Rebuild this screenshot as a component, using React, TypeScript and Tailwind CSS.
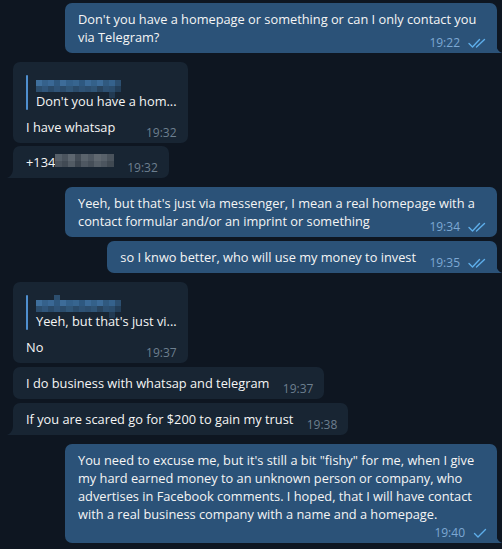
import type { ReactNode } from 'react'

type Msg = {
  out: boolean
  text: ReactNode
  time: string
  tail?: boolean
  read?: 'one' | 'two'
  reply?: string
  timeRow?: boolean
  gap: string
}

const BG_IN = '#182533'

// 가려진 이름/번호 모자이크 칸 색
const NAME_CELLS = [
  ['#3f6f9c', '#35618b', '#3a6895', '#2f587f', '#3d6c99', '#33608a', '#37658f', '#2e5880', '#3b6a97', '#34618a', '#3c6b98', '#30597f', '#35628c', '#2c4f70'],
  ['#2c4e6e', '#30557a', '#2a4a69', '#2f5377', '#2b4c6c', '#305678', '#2a4b6a', '#2e5275', '#2c4e6f', '#2f5476', '#28445f', '#2d5072', '#2b4d6d', '#233e58'],
  [BG_IN, BG_IN, BG_IN, BG_IN, BG_IN, BG_IN, BG_IN, BG_IN, BG_IN, BG_IN, BG_IN, BG_IN, '#223a52', BG_IN],
]
const REPLY2_CELLS = [
  [BG_IN, BG_IN, BG_IN, '#2c4e6e', BG_IN, BG_IN, BG_IN, BG_IN, BG_IN, BG_IN, BG_IN, BG_IN, BG_IN, BG_IN],
  ['#3f6f9c', '#35618b', '#3a6895', '#2f587f', '#3d6c99', '#33608a', '#37658f', '#2e5880', '#3b6a97', '#34618a', '#3c6b98', '#30597f', '#35628c', '#2c4f70'],
  ['#2c4e6e', '#30557a', '#2a4a69', '#2f5377', '#2b4c6c', '#305678', '#2a4b6a', '#2e5275', '#2c4e6f', '#2f5476', '#28445f', '#2d5072', '#2b4d6d', '#233e58'],
  [BG_IN, BG_IN, BG_IN, BG_IN, BG_IN, BG_IN, BG_IN, BG_IN, BG_IN, BG_IN, BG_IN, BG_IN, '#223a52', BG_IN],
]
const PHONE_CELLS = [
  ['#56606a', '#4b545e', '#5d666f', '#434c56', '#5a636c', '#4f5862', '#606870', '#58616a', '#4a535c'],
  ['#4a535d', '#414a54', '#525b64', '#3b444e', '#4e5761', '#454e58', '#555e67', '#4c555f', '#404952'],
]

const MSGS: Msg[] = [
  {
    out: true,
    text: "Don't you have a homepage or something or can I only contact you via Telegram?",
    time: '19:22',
    read: 'two',
    tail: true,
    gap: '',
  },
  {
    out: false,
    reply: "Don't you have a hom...",
    text: 'I have whatsap',
    time: '19:32',
    gap: 'mt-[9px]',
  },
  {
    out: false,
    text: (
      <>
        +134
        <span className="relative top-[1px] inline-block align-top">
          <Mosaic rows={PHONE_CELLS} cell={6.5} />
        </span>
      </>
    ),
    time: '19:32',
    tail: true,
    gap: 'mt-[3px]',
  },
  {
    out: true,
    text: "Yeeh, but that's just via messenger, I mean a real homepage with a contact formular and/or an imprint or something",
    time: '19:34',
    read: 'two',
    gap: 'mt-[9px]',
  },
  {
    out: true,
    text: 'so I knwo better, who will use my money to invest',
    time: '19:35',
    read: 'two',
    tail: true,
    gap: 'mt-[4px]',
  },
  {
    out: false,
    reply: "Yeeh, but that's just vi...",
    text: 'No',
    time: '19:37',
    gap: 'mt-[9px]',
  },
  {
    out: false,
    text: 'I do business with whatsap and telegram',
    time: '19:37',
    gap: 'mt-[4px]',
  },
  {
    out: false,
    text: 'If you are scared go for $200 to gain my trust',
    time: '19:38',
    tail: true,
    gap: 'mt-[4px]',
  },
  {
    out: true,
    text: 'You need to excuse me, but it\'s still a bit "fishy" for me, when I give my hard earned money to an unknown person or company, who advertises in Facebook comments. I hoped, that I will have contact with a real business company with a name and a homepage.',
    time: '19:40',
    read: 'one',
    tail: true,
    timeRow: true,
    gap: 'mt-[9px]',
  },
]

export default function App() {
  return (
    <main
      className="h-[549px] w-full overflow-hidden bg-[#0e1621] pl-[13px] pr-[5px] pt-[3px] text-[12.8px] text-[#f5f5f5]"
      style={{ fontFamily: '"Open Sans", "Noto Sans", sans-serif' }}
    >
      {MSGS.map((m, i) => (
        <Bubble key={i} m={m} idx={i} />
      ))}
    </main>
  )
}

function Bubble({ m, idx }: { m: Msg; idx: number }) {
  return (
    <div className={`flex ${m.out ? 'justify-end' : 'justify-start'} ${m.gap}`}>
      <div
        className={`relative max-w-[432px] rounded-[7px] pb-[7px] pl-[13px] pr-[11px] pt-[7px] leading-[18px] ${
          m.out ? 'bg-[#2b5278]' : 'bg-[#182533]'
        } ${m.tail && m.out ? 'rounded-br-none' : ''} ${
          m.tail && !m.out ? 'rounded-bl-none' : ''
        }`}
      >
        {m.reply && (
          <div className="mb-[8px] mt-[6px] flex">
            <div className="w-[2px] rounded-sm bg-[#4f8fcf]" />
            <div className="pl-[8px]">
              <div className={`h-[18px] ${idx === 5 ? 'pt-0' : 'pt-[5px]'}`}>
                <Mosaic rows={idx === 5 ? REPLY2_CELLS : NAME_CELLS} cell={6.1} />
              </div>
              <div className="leading-[17px]">{m.reply}</div>
            </div>
          </div>
        )}
        <div>
          {m.text}
          {!m.timeRow && (
            <span
              className={`inline-block h-[10px] ${m.out ? 'w-[70px]' : 'w-[44px]'}`}
            />
          )}
        </div>
        {m.timeRow && <div className="h-[13px]" />}

        <div
          className={`absolute bottom-[3px] flex items-center gap-[8px] text-[12px] leading-[14px] ${
            m.out ? 'right-[10px] text-[#7da8d3]' : 'right-[11px] text-[#6d7f8f]'
          }`}
        >
          <span>{m.time}</span>
          {m.read === 'two' && <DoubleCheck />}
          {m.read === 'one' && <SingleCheck />}
        </div>

        {m.tail && m.out && (
          <svg
            className="absolute bottom-0 right-[-5px]"
            width="6"
            height="10"
            viewBox="0 0 6 10"
          >
            <path d="M0 0 C0 5 2 8.5 6 10 L0 10 Z" fill="#2b5278" />
          </svg>
        )}
        {m.tail && !m.out && (
          <svg
            className="absolute bottom-0 left-[-6px]"
            width="6"
            height="10"
            viewBox="0 0 6 10"
          >
            <path d="M6 0 C6 5 4 8.5 0 10 L6 10 Z" fill="#182533" />
          </svg>
        )}
      </div>
    </div>
  )
}

function Mosaic({ rows, cell }: { rows: string[][]; cell: number }) {
  return (
    <div className="flex flex-col">
      {rows.map((r, i) => (
        <div key={i} className="flex">
          {r.map((c, j) => (
            <div
              key={j}
              style={{
                width: cell,
                height: i === 0 && rows.length === 4 ? 5 : cell,
                background: c,
              }}
            />
          ))}
        </div>
      ))}
    </div>
  )
}

function DoubleCheck() {
  return (
    <svg width="19" height="10" viewBox="0 0 19 10" fill="none">
      <path
        d="M1 5.5 L4.5 9 L11.5 1.5"
        stroke="#5eaeea"
        strokeWidth="1.4"
        strokeLinecap="round"
        strokeLinejoin="round"
      />
      <path
        d="M8.5 9 L16.5 1.5"
        stroke="#5eaeea"
        strokeWidth="1.4"
        strokeLinecap="round"
      />
    </svg>
  )
}

function SingleCheck() {
  return (
    <svg width="14" height="10" viewBox="0 0 14 10" fill="none">
      <path
        d="M1.5 5.5 L5 9 L12.5 1.5"
        stroke="#5eaeea"
        strokeWidth="1.4"
        strokeLinecap="round"
        strokeLinejoin="round"
      />
    </svg>
  )
}
